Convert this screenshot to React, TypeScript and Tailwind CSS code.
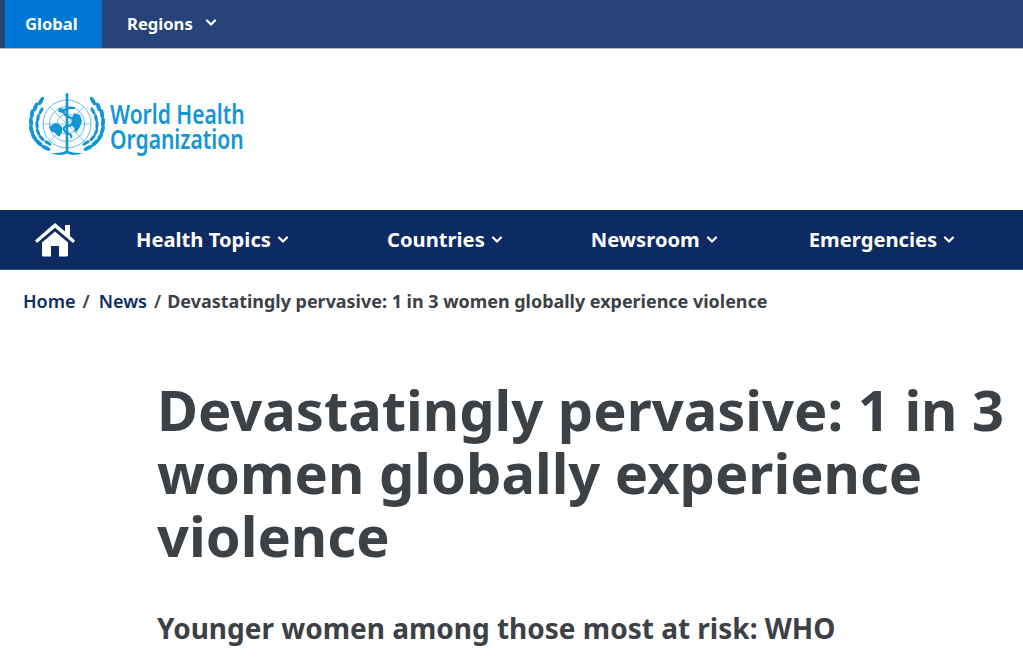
import React from "react";

const font = { fontFamily: '"Noto Sans", sans-serif' };

function Chevron({ className }: { className: string }) {
  return (
    <svg viewBox="0 0 12 8" className={className} fill="none" stroke="currentColor" strokeWidth="2.2" strokeLinecap="round" strokeLinejoin="round">
      <path d="M2 1.5 L6 5.5 L10 1.5" />
    </svg>
  );
}

function Wheat({ flip }: { flip?: boolean }) {
  const outer = [
    [12, 8, 30], [6.5, 14, 20], [3, 21, 8], [2, 29, -4], [2.5, 37, -16], [5, 44, -30], [10, 50, -46], [17, 55, -64],
  ];
  const inner = [
    [12, 18, 28], [9, 25, 10], [8, 32, -6], [9, 39, -22], [12.5, 45, -40], [19, 50, -58],
  ];
  return (
    <g transform={flip ? "translate(76,0) scale(-1,1)" : undefined} fill="#1296d8">
      {outer.map(([x, y, r], i) => (
        <ellipse key={i} cx={x} cy={y} rx="2" ry="4.8" transform={`rotate(${r} ${x} ${y})`} />
      ))}
      {inner.map(([x, y, r], i) => (
        <ellipse key={i} cx={x} cy={y} rx="1.6" ry="4" transform={`rotate(${r} ${x} ${y})`} />
      ))}
    </g>
  );
}

function Emblem() {
  return (
    <svg viewBox="0 0 76 66" className="w-[76px] h-[66px] shrink-0">
      <Wheat />
      <Wheat flip />
      <g fill="none" stroke="#1296d8" strokeWidth="0.8" opacity="0.8">
        <circle cx="38" cy="31" r="24" />
        <circle cx="38" cy="31" r="17.5" />
        <circle cx="38" cy="31" r="10" />
        <path d="M14 31H62M21 14L55 48M55 14L21 48" strokeWidth="0.6" />
      </g>
      <path d="M20 34l6-4 4 1 3 3v6l-3 4-4-4-4-2z M45 20l6 2 2 6-2 6-4 6-2-5-3-4 1-6z M30 15l6 1-2 4-5-1z" fill="#1296d8" />
      <rect x="36.7" y="0" width="2.6" height="60" rx="1.2" fill="#1296d8" />
      <path d="M46 15c-10-1-15 4-8 8 6 3 11 4 7 8-4 3-12 1-10 6 2 4 9 3 7 8" fill="none" stroke="#1296d8" strokeWidth="2.2" />
      <path d="M22 60c6 0 12 0 16-3 4 3 10 3 16 3-6 2.5-12 2.5-16 0.5-4 2-10 2-16-0.5z" fill="#1296d8" />
    </svg>
  );
}

function NavItem({ label, className }: { label: string; className: string }) {
  return (
    <span className={`flex items-center gap-[6px] text-[20.2px] font-bold text-white whitespace-nowrap ${className}`}>
      {label}
      <Chevron className="w-[12px] h-[8px] mt-[1px]" />
    </span>
  );
}

export default function App() {
  return (
    <div className="w-[1023px] h-[665px] overflow-hidden bg-white" style={font}>
      <div className="h-[49px] flex bg-[#26437a] border-b border-[#b9bdc6] pl-[5px] items-stretch">
        <div className="w-[97px] bg-[#0077d4] flex items-center pl-[20px] text-[16.6px] font-bold text-white">Global</div>
        <div className="flex items-center pl-[25px] text-[16.6px] font-bold text-white gap-[12px]">
          Regions
          <Chevron className="w-[12px] h-[8px] mb-[3px]" />
        </div>
      </div>

      <div className="h-[161px] flex items-start pl-[29px] pt-[44px] gap-[5px]">
        <Emblem />
        <div className="text-[#1296d8] text-[27.5px] leading-[25px] font-semibold pt-[8px] w-[134px] origin-left scale-x-[0.765] whitespace-nowrap">
          World Health
          <br />
          Organization
        </div>
      </div>

      <nav className="h-[60px] flex items-center bg-[#0d2b63] border-b border-[#3a557f]">
        <svg viewBox="0 0 42 36" className="w-[42px] h-[36px] ml-[34px] mb-[2px] shrink-0" fill="#fff">
          <path d="M21 2 L31 10.5 V4 H36 V15 L41 19.5 L39 22 L21 6.8 L3 22 L1 19.5 Z" />
          <path d="M8 21.5 L21 10.5 L34 21.5 V34 a1.5 1.5 0 0 1-1.5 1.5 H25 V25 H17 V35.5 H9.5 A1.5 1.5 0 0 1 8 34 Z" />
        </svg>
        <NavItem label="Health Topics" className="ml-[60px]" />
        <NavItem label="Countries" className="ml-[98px]" />
        <NavItem label="Newsroom" className="ml-[88px]" />
        <NavItem label="Emergencies" className="ml-[91px]" />
      </nav>

      <div className="pl-[23px] pt-[19px] flex items-center text-[18px] leading-[24px] font-semibold whitespace-nowrap">
        <span className="text-[#0d2b63]">Home</span>
        <span className="text-[#3c4146] ml-[7px]">/</span>
        <span className="text-[#0d2b63] ml-[9px]">News</span>
        <span className="text-[#3c4146] ml-[7px]">/</span>
        <span className="text-[#3c4146] ml-[6px] font-bold text-[17.95px]">Devastatingly pervasive: 1 in 3 women globally experience violence</span>
      </div>

      <div className="pl-[157px] pt-[65px] text-[#3c4146]">
        <h1 className="text-[56px] leading-[63px] font-bold whitespace-nowrap">
          Devastatingly pervasive: 1 in 3
          <br />
          women globally experience
          <br />
          violence
        </h1>
        <h2 className="mt-[41px] text-[28px] leading-[40px] font-bold whitespace-nowrap">Younger women among those most at risk: WHO</h2>
      </div>
    </div>
  );
}
